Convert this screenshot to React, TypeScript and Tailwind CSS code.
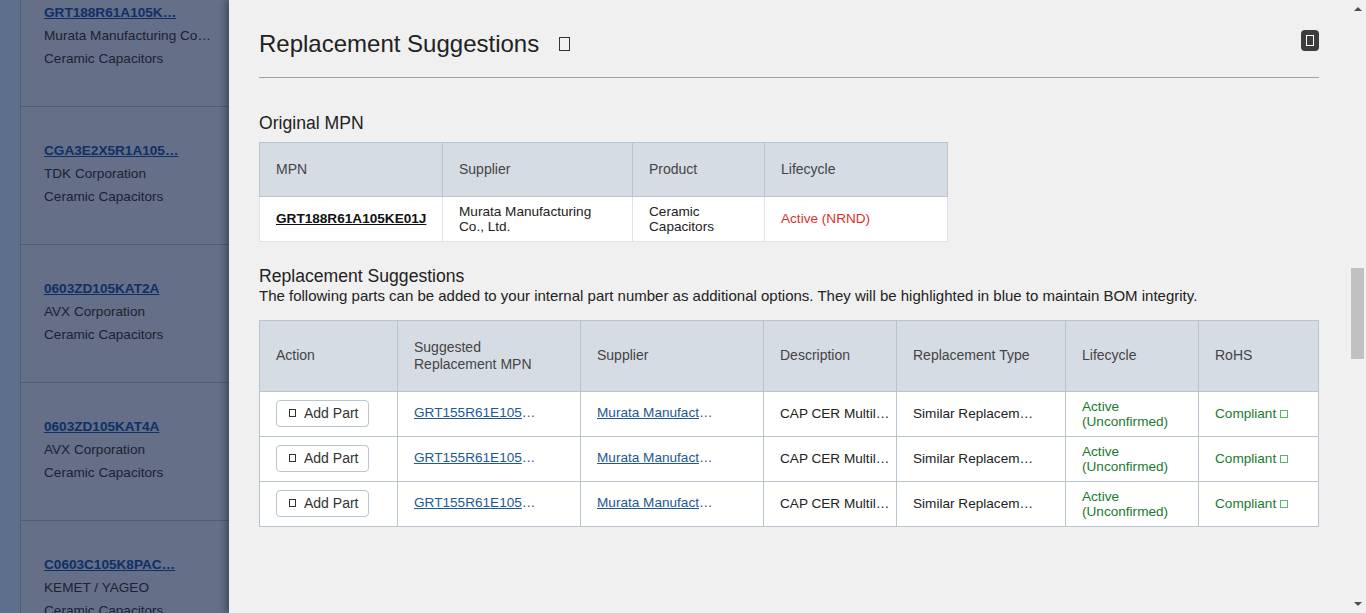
import React from "react";

const parts = [
  { mpn: "GRT188R61A105K…", supplier: "Murata Manufacturing Co…" },
  { mpn: "CGA3E2X5R1A105…", supplier: "TDK Corporation" },
  { mpn: "0603ZD105KAT2A", supplier: "AVX Corporation" },
  { mpn: "0603ZD105KAT4A", supplier: "AVX Corporation" },
  { mpn: "C0603C105K8PAC…", supplier: "KEMET / YAGEO" },
];

const rows = [0, 1, 2];

// the page's icon font is missing, so its icons show as empty boxes
const Tofu = ({ className }: { className: string }) => (
  <span className={`inline-block shrink-0 border ${className}`} />
);

const th = "border border-[#b8c4d0] bg-[#d5dce4] px-4 text-left align-middle font-normal text-[#444444]";
const td = "border border-[#b8c4d0] bg-white px-4 align-middle text-[13.6px]";
const tdLight = "border border-[#dfe3e8] bg-white px-4 align-middle text-[13.6px]";
const link = "text-[#1d5a94] underline";

export default function App() {
  return (
    <div className="flex h-[613px] w-full overflow-hidden font-['Liberation_Sans',Arial,sans-serif] text-sm text-[#222222]">
      <div className="h-full w-[229px] shrink-0 overflow-hidden bg-[#5e6f8d]">
        <div className="ml-5 -mt-[31px] border-l border-[#4f5c78] bg-[#656f88]">
          {parts.map((p) => (
            <div key={p.mpn} className="h-[138px] border-b border-[#4f5c78] pl-[23px] pt-[32px] text-[13.6px] leading-[23px] text-[#1b2233]">
              <div className="font-bold text-[#0f2f66] underline">{p.mpn}</div>
              <div>{p.supplier}</div>
              <div>Ceramic Capacitors</div>
            </div>
          ))}
        </div>
      </div>

      <div className="relative flex h-full flex-1 bg-[#f0f0f0] shadow-[-4px_0_6px_rgba(0,0,0,0.3)]">
        <div className="flex-1 pl-[30px] pr-[31px]">
          <div className="flex h-[78px] items-start justify-between border-b border-[#a0a0a0] pt-[30px]">
            <div className="flex items-center text-2xl leading-7 text-[#222222]">
              Replacement Suggestions
              <Tofu className="ml-5 h-[14px] w-[11px] border-[#333333]" />
            </div>
            <div className="flex h-[21px] w-[18px] items-center justify-center rounded bg-[#3c3c3c]">
              <Tofu className="h-[11px] w-2 border-white" />
            </div>
          </div>

          <h2 className="mt-[35px] text-[17.6px] leading-[21px]">Original MPN</h2>
          <table className="mt-2 w-[689px] table-fixed border-collapse leading-[15px]">
            <colgroup>
              <col className="w-[183px]" />
              <col className="w-[190px]" />
              <col className="w-[132px]" />
              <col />
            </colgroup>
            <thead>
              <tr className="h-[54px]">
                <th className={th}>MPN</th>
                <th className={th}>Supplier</th>
                <th className={th}>Product</th>
                <th className={th}>Lifecycle</th>
              </tr>
            </thead>
            <tbody>
              <tr className="h-[45px]">
                <td className={`${tdLight} pb-[2px] font-bold text-[#111111] underline`}>GRT188R61A105KE01J</td>
                <td className={`${tdLight} pb-[1px]`}>Murata Manufacturing Co., Ltd.</td>
                <td className={`${tdLight} pb-[1px]`}>Ceramic Capacitors</td>
                <td className={`${tdLight} pb-[2px] text-[#e03030]`}>Active (NRND)</td>
              </tr>
            </tbody>
          </table>

          <h2 className="mt-6 text-[17.6px] leading-[21px]">Replacement Suggestions</h2>
          <p className="text-[15px] leading-[18px] text-[#222222]">
            The following parts can be added to your internal part number as additional options. They will be highlighted in blue to maintain BOM integrity.
          </p>
          <table className="mt-[15px] w-[1060px] table-fixed border-collapse leading-[17px]">
            <colgroup>
              <col className="w-[138px]" />
              <col className="w-[183px]" />
              <col className="w-[183px]" />
              <col className="w-[133px]" />
              <col className="w-[169px]" />
              <col className="w-[133px]" />
              <col />
            </colgroup>
            <thead>
              <tr className="h-[71px]">
                <th className={`${th} pb-[1px]`}>Action</th>
                <th className={`${th} pb-[1px]`}>Suggested Replacement MPN</th>
                <th className={`${th} pb-[1px]`}>Supplier</th>
                <th className={`${th} pb-[1px]`}>Description</th>
                <th className={`${th} pb-[1px]`}>Replacement Type</th>
                <th className={`${th} pb-[1px]`}>Lifecycle</th>
                <th className={`${th} pb-[1px]`}>RoHS</th>
              </tr>
            </thead>
            <tbody className="leading-[15px]">
              {rows.map((r) => (
                <tr key={r} className="h-[45px]">
                  <td className={`${td} pb-[2px]`}>
                    <button className="flex h-[27px] w-[93px] items-center justify-start rounded border border-[#b8c4d0] bg-white pl-3 text-sm text-[#333333]">
                      <Tofu className="mr-2 h-2 w-[7px] border-[#333333]" />
                      Add Part
                    </button>
                  </td>
                  <td className={`${td} pb-1`}>
                    <span className={link}>GRT155R61E105</span>
                    <span className="text-[#1d5a94]">…</span>
                  </td>
                  <td className={`${td} pb-1`}>
                    <span className={link}>Murata Manufact</span>
                    <span className="text-[#1d5a94]">…</span>
                  </td>
                  <td className={`${td} truncate pb-[2px] pr-1`}>CAP CER Multil…</td>
                  <td className={`${td} truncate pb-[2px]`}>Similar Replacem…</td>
                  <td className={`${td} pb-[1px] text-[#1a7a2e]`}>Active (Unconfirmed)</td>
                  <td className={`${td} whitespace-nowrap pb-[2px] text-[#1a7a2e]`}>
                    Compliant
                    <Tofu className="ml-1 h-2 w-2 border-[#5bb56a] align-[-0.5px]" />
                  </td>
                </tr>
              ))}
            </tbody>
          </table>
        </div>

        <div className="flex h-full w-4 shrink-0 flex-col items-center bg-[#f1f1f1] pb-[7px] pt-[7px]">
          <svg width="8" height="4" viewBox="0 0 8 4" className="shrink-0">
            <path d="M4 0L8 4H0Z" fill="#505050" />
          </svg>
          <div className="ml-px mt-[257px] h-[91px] w-[13px] self-start bg-[#c1c1c1]" />
          <svg width="8" height="4" viewBox="0 0 8 4" className="mt-auto shrink-0">
            <path d="M0 0H8L4 4Z" fill="#505050" />
          </svg>
        </div>
      </div>
    </div>
  );
}
